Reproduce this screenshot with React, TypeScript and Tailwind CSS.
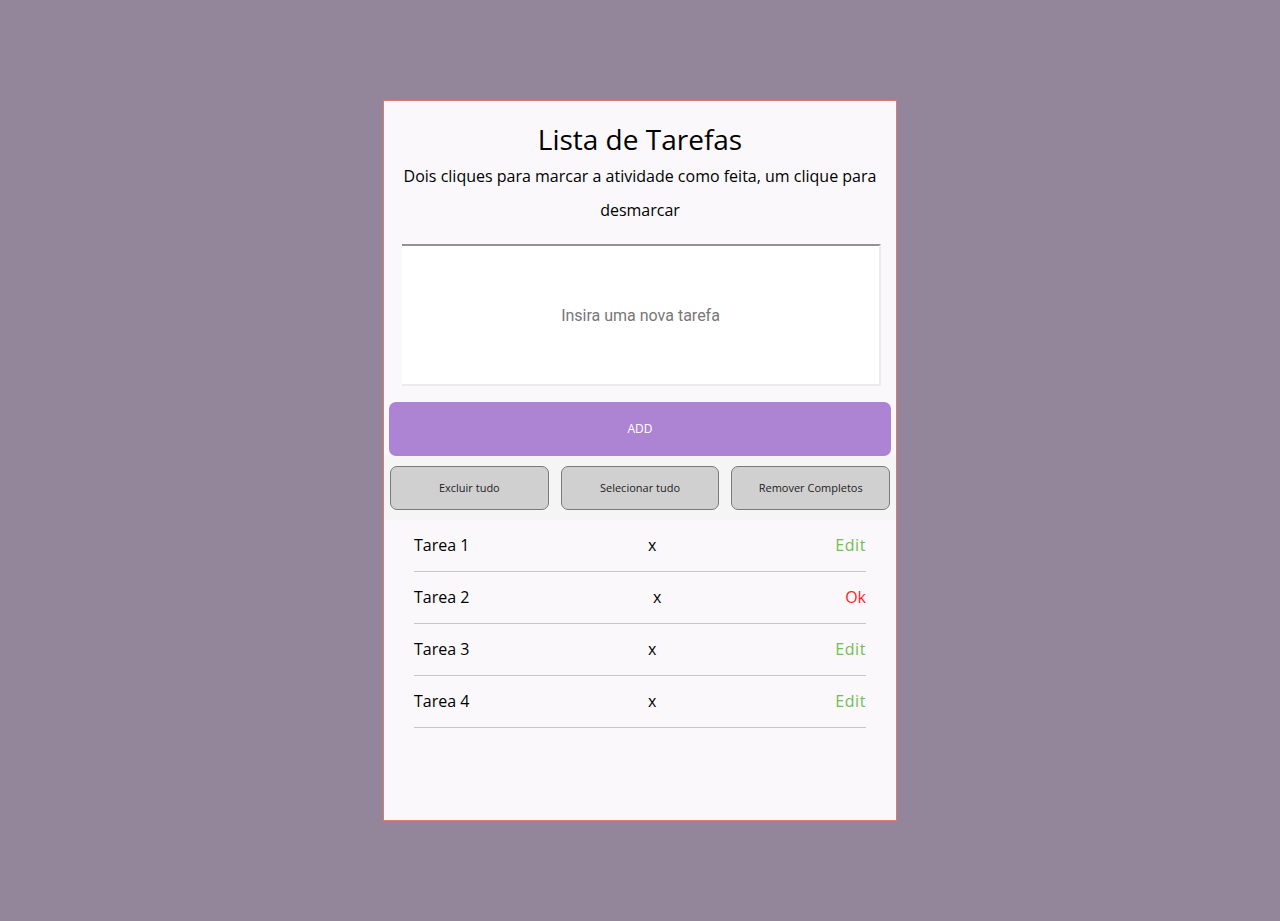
const tasks = [
  { name: "Tarea 1", editing: false },
  { name: "Tarea 2", editing: true },
  { name: "Tarea 3", editing: false },
  { name: "Tarea 4", editing: false },
];

function TaskRow({ name, editing }: { name: string; editing: boolean }) {
  return (
    <li className="flex h-[52px] items-center justify-between border-b border-[#c6c6c6] pb-[2px] text-[16px] text-black">
      <span>{name}</span>
      <span>x</span>
      {editing ? (
        <span className="text-[#ff1e1e]">Ok</span>
      ) : (
        <span className="tracking-[0.6px] text-[#72bd58]">Edit</span>
      )}
    </li>
  );
}

export default function App() {
  return (
    <div
      className="min-h-[921px] w-full bg-[#94869a] pt-[100px]"
      style={{ fontFamily: '"Open Sans", "Liberation Sans", sans-serif' }}
    >
      <div className="mx-auto flex h-[721px] w-[514px] flex-col border border-[#dc7a78] bg-[#faf8fb]">
        <header className="pt-[20px] text-center">
          <h1 className="text-[28px] leading-[36px] font-normal text-black">Lista de Tarefas</h1>
          <p className="mt-[2px] whitespace-nowrap text-[16px] leading-[34px] text-black">
            Dois cliques para marcar a atividade como feita, um clique para
            <br />
            desmarcar
          </p>
        </header>

        <input
          type="text"
          placeholder="Insira uma nova tarefa"
          className="mt-[17px] ml-[18px] h-[142px] w-[479px] border-t-2 border-r-2 border-b-2 border-t-[#939393] border-r-[#ececec] border-b-[#ececec] bg-white text-center text-[16px] text-[#333] outline-none placeholder:text-[#777]"
          style={{ fontFamily: 'Roboto, "Liberation Sans", sans-serif' }}
        />

        <button className="mx-[5px] mt-[16px] h-[54px] rounded-[7px] bg-[#ad83d4] text-[12px] text-white">
          ADD
        </button>

        <div className="grid grid-cols-3 gap-[12px] bg-[#f5f5f5] px-[6px] py-[10px]">
          <button className="h-[44px] rounded-[7px] border border-[#7a7a7a] bg-[#d1d0d1] text-[11px] text-[#222]">
            Excluir tudo
          </button>
          <button className="h-[44px] rounded-[7px] border border-[#7a7a7a] bg-[#d1d0d1] text-[11px] text-[#222]">
            Selecionar tudo
          </button>
          <button className="h-[44px] rounded-[7px] border border-[#7a7a7a] bg-[#d1d0d1] text-[11px] text-[#222]">
            Remover Completos
          </button>
        </div>

        <ul className="px-[30px]">
          {tasks.map((t) => (
            <TaskRow key={t.name} name={t.name} editing={t.editing} />
          ))}
        </ul>
      </div>
    </div>
  );
}
